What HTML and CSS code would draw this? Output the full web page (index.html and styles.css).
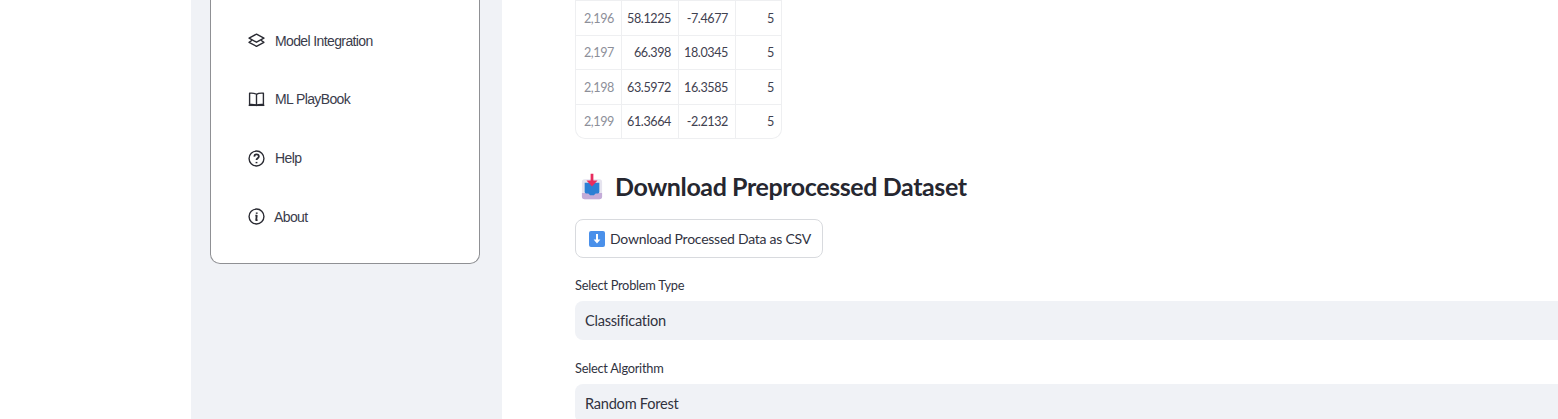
FILE: index.html
```html
<!DOCTYPE html>
<html lang="en">
<head>
<meta charset="utf-8">
<title>Download Preprocessed Dataset</title>
<link rel="stylesheet" href="styles.css">
</head>
<body>
<div class="page">
  <div class="gutter"></div>
  <aside class="sidebar">
    <nav class="card">
      <a class="item"><svg class="ico" viewBox="0 0 16 16"><path d="M8 2 15 5.800 8 9.600 1 5.800z"/><path d="M3.800 7.800 1 9.700 8 13.500l7-3.800-2.800-1.900"/></svg><span>Model Integration</span></a>
      <a class="item"><svg class="ico" viewBox="0 0 16 16"><path d="M8 3.200C6.800 2.300 4.500 1.900 1.500 2.100v10.500c3-.2 5.300.1 6.500 1 1.200-.9 3.500-1.200 6.500-1V2.100C11.500 1.900 9.200 2.300 8 3.200zM8 3.200v10.400"/><path d="M.6 13.500h14.800"/></svg><span>ML PlayBook</span></a>
      <a class="item"><svg class="ico" viewBox="0 0 16 16"><circle cx="8" cy="8" r="7"/><path class="bold" d="M5.900 6.200C6 4.900 7 4.200 8.100 4.200c1.200 0 2.100.8 2.100 1.900 0 1.700-2.200 1.700-2.200 3.400"/><path class="bold" d="M8 11.200v1.300"/></svg><span>Help</span></a>
      <a class="item item-about"><svg class="ico" viewBox="0 0 16 16"><circle cx="8" cy="8" r="7"/><path class="bold" d="M6.900 7.200H8.200L7.700 11.500H9"/><path class="bold" d="M8.200 4.200v1.300"/></svg><span>About</span></a>
    </nav>
  </aside>
  <main class="main">
    <div class="table">
      <div class="row"><div class="cell idx">2,196</div><div class="cell c1">58.1225</div><div class="cell c2">-7.4677</div><div class="cell c3">5</div></div>
      <div class="row"><div class="cell idx">2,197</div><div class="cell c1">66.398</div><div class="cell c2">18.0345</div><div class="cell c3">5</div></div>
      <div class="row"><div class="cell idx">2,198</div><div class="cell c1">63.5972</div><div class="cell c2">16.3585</div><div class="cell c3">5</div></div>
      <div class="row"><div class="cell idx">2,199</div><div class="cell c1">61.3664</div><div class="cell c2">-2.2132</div><div class="cell c3">5</div></div>
    </div>
    <h2 class="heading">
      <svg class="inbox" viewBox="0 0 24 28">
        <rect x="1" y="6" width="22" height="22" rx="3" fill="#e6e4ef"/>
        <path d="M1 21h22v4a3 3 0 0 1-3 3H4a3 3 0 0 1-3-3z" fill="#c4acd8"/>
        <path d="M4 10h16v10a1.500 1.500 0 0 1-1.500 1.500H16l-2 2h-4l-2-2H5.500A1.500 1.500 0 0 1 4 20z" fill="#2b7fd4"/>
        <path d="M10.500 0h3v7.500H18l-6 6.500-6-6.500h4.500z" fill="#e82c5e"/>
      </svg>
      <span>Download Preprocessed Dataset</span>
    </h2>
    <button class="btn" type="button"><svg class="arrow" viewBox="0 0 16 16"><rect width="16" height="16" rx="2" fill="#4a90ea"/><path d="M7 3h2v5.600h2.400L8 12.500 4.600 8.600H7z" fill="#fff"/></svg><span>Download Processed Data as CSV</span></button>
    <div class="field">
      <label class="label">Select Problem Type</label>
      <div class="select">Classification</div>
    </div>
    <div class="field">
      <label class="label">Select Algorithm</label>
      <div class="select">Random Forest</div>
    </div>
  </main>
</div>
</body>
</html>
```

FILE: styles.css
```css
* { box-sizing: border-box; }
html, body { margin: 0; height: 100%; overflow: hidden; background: #fff; }
body { font-family: Lato, "Noto Sans", sans-serif; color: #31333f; }

.page { display: flex; height: 419px; }
.gutter { width: 191px; flex: none; background: #fff; }

.sidebar { width: 311px; flex: none; background: #f0f2f6; padding-left: 19px; }
.card {
  width: 270px; height: 264px;
  background: #fff;
  border: 1px solid #8f9094; border-top: 0;
  border-radius: 0 0 10px 10px;
  padding: 26px 0 0 37px;
  display: flex; flex-direction: column; gap: 29.800px;
}
.item {
  display: flex; align-items: center; gap: 10px; height: 29px;
  font-family: "Liberation Sans", Arial, sans-serif; font-size: 14px; letter-spacing: -.62px;
  color: #3a3c4b;
}
.item-about { gap: 9px; }
.ico { width: 17px; height: 17px; flex: none; fill: none; stroke: #2a2b33; stroke-width: 1.300; stroke-linejoin: round; }
.ico .bold { stroke-width: 1.700; }

.main { flex: 1; min-width: 0; padding-left: 73px; }

.table {
  width: 207px; height: 139px;
  border: 1px solid #eeeff1; border-top: 0;
  border-radius: 0 0 10px 10px;
  font-size: 12.600px; letter-spacing: -.4px;
  color: #3f4150;
  overflow: hidden;
}
.row { display: flex; height: 34.500px; border-top: 1px solid #eeeff1; }
.cell { display: flex; align-items: center; justify-content: flex-end; padding: 1px 7px 0 0; border-right: 1px solid #eeeff1; }
.idx { width: 46px; color: #8d8f99; }
.c1 { width: 57px; }
.c2 { width: 57px; }
.c3 { flex: 1; border-right: 0; }

.heading {
  display: flex; align-items: center; gap: 12px;
  margin: 32px 0 0; height: 30px; padding-left: 6px;
  font-size: 25px; font-weight: 700; letter-spacing: -.4px; color: #262730;
}
.inbox { width: 22px; height: 27px; flex: none; }

.btn {
  display: flex; align-items: center; gap: 5px;
  margin-top: 18px; width: 248px; height: 39px; padding: 0 0 0 13px;
  background: #fff; border: 1px solid #d8dade; border-radius: 8px;
  font-family: inherit; font-size: 14px; letter-spacing: -.25px; color: #31333f; white-space: nowrap;
}
.arrow { width: 16px; height: 16px; flex: none; }

.field { margin-top: 18px; }
.field + .field { margin-top: 19px; }
.label { display: block; height: 25px; font-size: 12.800px; letter-spacing: -.25px; color: #31333f; line-height: 18px; }
.select {
  height: 39px; line-height: 39px; padding-left: 10px;
  background: #f0f2f6; border-radius: 8px 0 0 8px;
  font-size: 14.600px; letter-spacing: -.25px; color: #31333f;
}
```
